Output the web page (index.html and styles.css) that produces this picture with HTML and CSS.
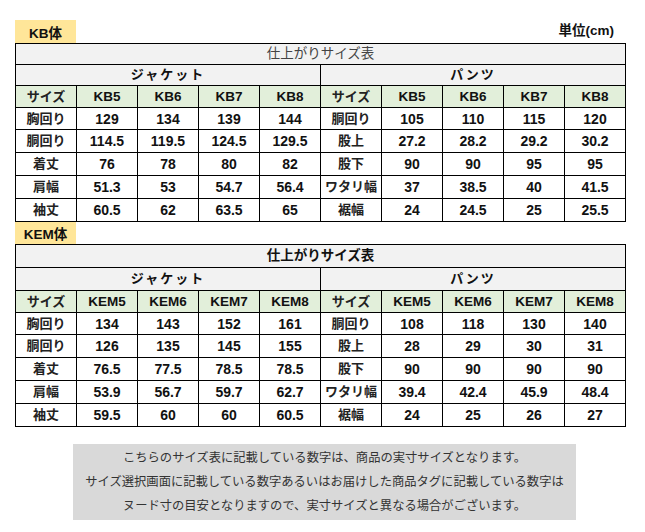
FILE: index.html
```html
<!DOCTYPE html>
<html lang="ja">
<head>
<meta charset="utf-8">
<title>サイズ表</title>
<link rel="stylesheet" href="styles.css">
</head>
<body>
<div class="page">
  <div class="label-row first">
    <span class="tag">KB体</span>
    <span class="unit">単位(cm)</span>
  </div>
  <table class="size-table">
    <colgroup><col><col><col><col><col><col><col><col><col><col></colgroup>
    <tr class="h21"><td colspan="10" class="title thin">仕上がりサイズ表</td></tr>
    <tr class="h21 group"><td colspan="5">ジャケット</td><td colspan="5">パンツ</td></tr>
    <tr class="h22 sizes"><td class="jp">サイズ</td><td>KB5</td><td>KB6</td><td>KB7</td><td>KB8</td><td class="jp">サイズ</td><td>KB5</td><td>KB6</td><td>KB7</td><td>KB8</td></tr>
    <tr class="h22"><td class="jp">胸回り</td><td>129</td><td>134</td><td>139</td><td>144</td><td class="jp">胴回り</td><td>105</td><td>110</td><td>115</td><td>120</td></tr>
    <tr class="h23"><td class="jp">胴回り</td><td>114.5</td><td>119.5</td><td>124.5</td><td>129.5</td><td class="jp">股上</td><td>27.2</td><td>28.2</td><td>29.2</td><td>30.2</td></tr>
    <tr class="h23"><td class="jp">着丈</td><td>76</td><td>78</td><td>80</td><td>82</td><td class="jp">股下</td><td>90</td><td>90</td><td>95</td><td>95</td></tr>
    <tr class="h23"><td class="jp">肩幅</td><td>51.3</td><td>53</td><td>54.7</td><td>56.4</td><td class="jp">ワタリ幅</td><td>37</td><td>38.5</td><td>40</td><td>41.5</td></tr>
    <tr class="h23"><td class="jp">袖丈</td><td>60.5</td><td>62</td><td>63.5</td><td>65</td><td class="jp">裾幅</td><td>24</td><td>24.5</td><td>25</td><td>25.5</td></tr>
  </table>

  <div class="label-row second">
    <span class="tag">KEM体</span>
  </div>
  <table class="size-table">
    <colgroup><col><col><col><col><col><col><col><col><col><col></colgroup>
    <tr class="h23"><td colspan="10" class="title">仕上がりサイズ表</td></tr>
    <tr class="h23 group"><td colspan="5">ジャケット</td><td colspan="5">パンツ</td></tr>
    <tr class="h22 sizes"><td class="jp">サイズ</td><td>KEM5</td><td>KEM6</td><td>KEM7</td><td>KEM8</td><td class="jp">サイズ</td><td>KEM5</td><td>KEM6</td><td>KEM7</td><td>KEM8</td></tr>
    <tr class="h22"><td class="jp">胸回り</td><td>134</td><td>143</td><td>152</td><td>161</td><td class="jp">胴回り</td><td>108</td><td>118</td><td>130</td><td>140</td></tr>
    <tr class="h23"><td class="jp">胴回り</td><td>126</td><td>135</td><td>145</td><td>155</td><td class="jp">股上</td><td>28</td><td>29</td><td>30</td><td>31</td></tr>
    <tr class="h23"><td class="jp">着丈</td><td>76.5</td><td>77.5</td><td>78.5</td><td>78.5</td><td class="jp">股下</td><td>90</td><td>90</td><td>90</td><td>90</td></tr>
    <tr class="h23"><td class="jp">肩幅</td><td>53.9</td><td>56.7</td><td>59.7</td><td>62.7</td><td class="jp">ワタリ幅</td><td>39.4</td><td>42.4</td><td>45.9</td><td>48.4</td></tr>
    <tr class="h23"><td class="jp">袖丈</td><td>59.5</td><td>60</td><td>60</td><td>60.5</td><td class="jp">裾幅</td><td>24</td><td>25</td><td>26</td><td>27</td></tr>
  </table>

  <div class="note">
    <p>こちらのサイズ表に記載している数字は、商品の実寸サイズとなります。</p>
    <p>サイズ選択画面に記載している数字あるいはお届けした商品タグに記載している数字は</p>
    <p>ヌード寸の目安となりますので、実寸サイズと異なる場合がございます。</p>
  </div>
</div>
</body>
</html>
```

FILE: styles.css
```css
html, body {
  margin: 0;
  padding: 0;
  background: #ffffff;
}

body {
  font-family: "Liberation Sans", "Noto Sans CJK JP", sans-serif;
  color: #111;
}

.page {
  width: 611px;
  margin-left: 15px;
  padding-top: 20px;
}

.label-row {
  display: flex;
  justify-content: space-between;
  align-items: center;
}

.label-row.first {
  height: 23px;
}

.label-row.second {
  height: 22px;
}

.tag {
  width: 61px;
  height: 100%;
  display: flex;
  align-items: center;
  justify-content: center;
  background: #ffe699;
  font-weight: bold;
  font-size: 13.5px;
  color: #111;
}

.unit {
  font-weight: bold;
  font-size: 13.5px;
  margin-right: 12px;
  margin-top: -6px;
  color: #111;
}

.size-table {
  width: 611px;
  table-layout: fixed;
  border-collapse: collapse;
  border: 1px solid #000;
}

.size-table td {
  border: 1px solid #000;
  padding: 0;
  text-align: center;
  vertical-align: middle;
  font-weight: bold;
  font-size: 14px;
  line-height: 16px;
  color: #111;
  white-space: nowrap;
}

.size-table td.jp {
  font-size: 13px;
  color: #222;
}

.size-table tr.h21 { height: 21px; }
.size-table tr.h22 { height: 22px; }
.size-table tr.h23 { height: 23px; }

.size-table td.title {
  background: #f2f2f2;
  font-size: 13.5px;
}

.size-table td.title.thin {
  font-weight: normal;
  color: #444;
}

.size-table tr.group td {
  background: #f2f2f2;
  font-size: 13px;
  letter-spacing: 2px;
}

.size-table tr.sizes td {
  background: #e2efda;
  font-size: 13.5px;
}

.size-table tr.sizes td.jp {
  font-size: 13px;
}

.note {
  margin-top: 17px;
  margin-left: 58px;
  width: 503px;
  background: #d9d9d9;
  padding: 2px 0;
  text-align: center;
  color: #333;
  font-size: 12.3px;
}

.note p {
  margin: 0;
  line-height: 24px;
}
```
